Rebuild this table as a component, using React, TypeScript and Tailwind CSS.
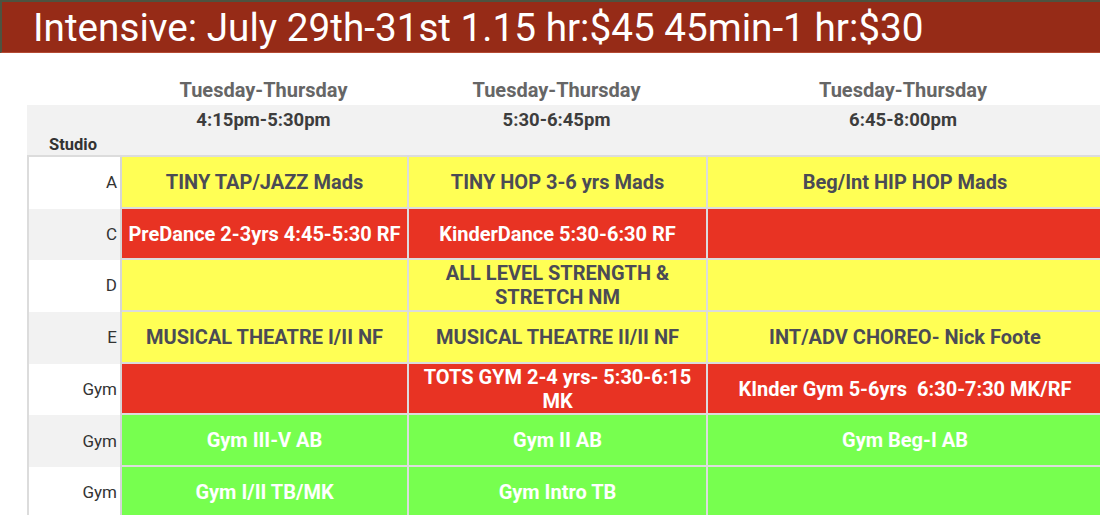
import React from 'react'

type Cell = { text: string; bg: 'y' | 'r' | 'g'; nowrap?: boolean }

const bgClass = {
  y: 'bg-[#ffff55] text-[#4b4b55]',
  r: 'bg-[#e83323] text-white',
  g: 'bg-[#77ff4f] text-white',
}

const rows: { studio: string; cells: Cell[] }[] = [
  { studio: 'A', cells: [{ text: 'TINY TAP/JAZZ Mads', bg: 'y' }, { text: 'TINY HOP 3-6 yrs Mads', bg: 'y' }, { text: 'Beg/Int HIP HOP Mads', bg: 'y' }] },
  { studio: 'C', cells: [{ text: 'PreDance 2-3yrs 4:45-5:30 RF', bg: 'r', nowrap: true }, { text: 'KinderDance 5:30-6:30 RF', bg: 'r' }, { text: '', bg: 'r' }] },
  { studio: 'D', cells: [{ text: '', bg: 'y' }, { text: 'ALL LEVEL STRENGTH & STRETCH NM', bg: 'y' }, { text: '', bg: 'y' }] },
  { studio: 'E', cells: [{ text: 'MUSICAL THEATRE I/II NF', bg: 'y' }, { text: 'MUSICAL THEATRE II/II NF', bg: 'y' }, { text: 'INT/ADV CHOREO- Nick Foote', bg: 'y' }] },
  { studio: 'Gym', cells: [{ text: '', bg: 'r' }, { text: 'TOTS GYM 2-4 yrs- 5:30-6:15 MK', bg: 'r' }, { text: 'KInder Gym 5-6yrs\u00a0 6:30-7:30 MK/RF', bg: 'r', nowrap: true }] },
  { studio: 'Gym', cells: [{ text: 'Gym III-V AB', bg: 'g' }, { text: 'Gym II AB', bg: 'g' }, { text: 'Gym Beg-I AB', bg: 'g' }] },
  { studio: 'Gym', cells: [{ text: 'Gym I/II TB/MK', bg: 'g' }, { text: 'Gym Intro TB', bg: 'g' }, { text: '', bg: 'g' }] },
]

const times = ['4:15pm-5:30pm', '5:30-6:45pm', '6:45-8:00pm']

const App = () => {
  return (
    <div className="w-[1100px] h-[515px] overflow-hidden bg-white font-['Roboto',sans-serif]">
      <div className="h-[53px] bg-[#962b17] border-t-2 border-l-2 border-[#4d5340] border-b border-b-[#b44a33] flex items-center pl-[31px]">
        <h1 className="text-white text-[38.7px] leading-none whitespace-nowrap pt-[3px]">Intensive: July 29th-31st 1.15 hr:$45 45min-1 hr:$30</h1>
      </div>

      <div className="ml-[27px] mt-[2px]">
        <div className="grid grid-cols-[93px_287px_299px_394px]">
          <div className="h-[50px]"></div>
          {times.map((t) => (
            <div key={'d' + t} className="h-[50px] flex items-end justify-center text-[20px] font-bold text-[#666666]">Tuesday-Thursday</div>
          ))}
        </div>
        <div className="grid grid-cols-[93px_287px_299px_394px] bg-[#f2f2f2] h-[52px] border-b-2 border-[#dcdcdc]">
          <div className="flex items-end pl-[22px] pb-0 text-[16.5px] font-bold text-[#333] translate-y-[3px]">Studio</div>
          {times.map((t) => (
            <div key={t} className="flex justify-center pt-[2px] text-[18.5px] font-bold text-[#3d3d3d]">{t}</div>
          ))}
        </div>

        <div className="grid grid-cols-[93px_287px_299px_394px] border-l-2 border-[#dcdcdc]">
          {rows.map((row, i) => (
            <React.Fragment key={i}>
              <div className={`h-[51.7px] flex items-center justify-end pr-[3px] text-[17px] text-[#333] border-r-2 border-[#d6d6d6] ${i % 2 === 1 ? 'bg-[#f2f2f2]' : 'bg-white'}`}>
                {row.studio}
              </div>
              {row.cells.map((c, j) => (
                <div
                  key={j}
                  className={`h-[51.7px] flex items-center justify-center text-center font-bold text-[20px] leading-[24px] px-1 border-b-2 border-[#dcdcdc] ${j < 2 ? 'border-r-2' : ''} ${c.nowrap ? 'whitespace-nowrap' : ''} ${bgClass[c.bg]}`}
                >
                  {c.text}
                </div>
              ))}
            </React.Fragment>
          ))}
        </div>
      </div>
    </div>
  )
}

export default App
